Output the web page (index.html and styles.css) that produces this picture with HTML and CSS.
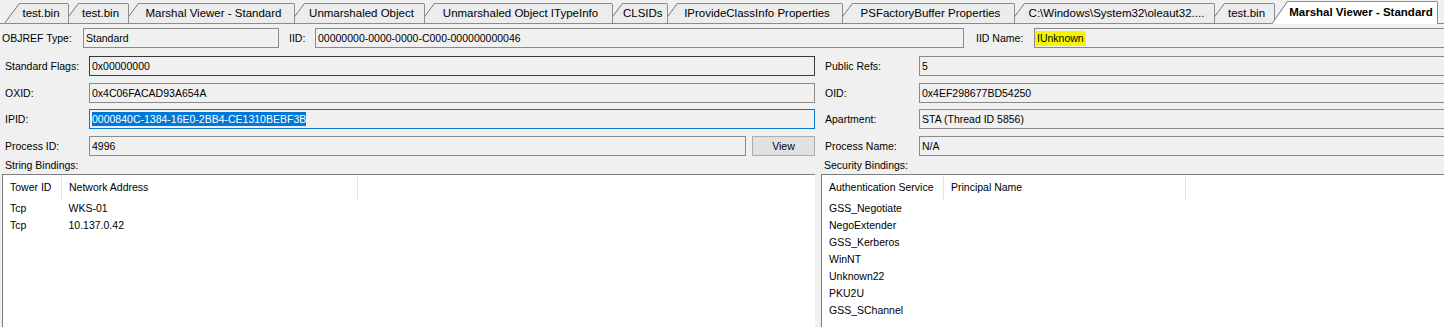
FILE: index.html
```html
<!DOCTYPE html>
<html lang="en">
<head>
    <meta charset="UTF-8">
    <title>Marshal Viewer - Standard</title>
    <link rel="stylesheet" href="styles.css">
</head>
<body>
    <div class="window">
        <div class="tabstrip">
            <div class="tab tab-bin1">test.bin</div>
            <div class="tab tab-bin2">test.bin</div>
            <div class="tab tab-marshal">Marshal Viewer - Standard</div>
            <div class="tab tab-unmarshal">Unmarshaled Object</div>
            <div class="tab tab-typeinfo">Unmarshaled Object ITypeInfo</div>
            <div class="tab tab-clsids">CLSIDs</div>
            <div class="tab tab-classinfo">IProvideClassInfo Properties</div>
            <div class="tab tab-psfactory">PSFactoryBuffer Properties</div>
            <div class="tab tab-oleaut">C:\Windows\System32\oleaut32....</div>
            <div class="tab tab-bin3">test.bin</div>
            <div class="tab active">Marshal Viewer - Standard</div>
        </div>

        <div class="top-row">
            <span class="label objref-label">OBJREF Type:</span>
            <div class="box objref-box">Standard</div>
            <span class="label iid-label">IID:</span>
            <div class="box iid-box">00000000-0000-0000-C000-000000000046</div>
            <span class="label iidname-label">IID Name:</span>
            <div class="box iidname-box"><span class="found-name">IUnknown</span></div>
        </div>

        <div class="fields">
            <span class="label">Standard Flags:</span>
            <div class="box dark">0x00000000</div>
            <span class="label right-label">Public Refs:</span>
            <div class="box">5</div>

            <span class="label">OXID:</span>
            <div class="box">0x4C06FACAD93A654A</div>
            <span class="label right-label">OID:</span>
            <div class="box">0x4EF298677BD54250</div>

            <span class="label">IPID:</span>
            <div class="box focused"><span class="sel">0000840C-1384-16E0-2BB4-CE1310BEBF3B</span></div>
            <span class="label right-label">Apartment:</span>
            <div class="box">STA (Thread ID 5856)</div>

            <span class="label">Process ID:</span>
            <div class="pid-cell">
                <div class="box pid-box">4996</div>
                <button class="view-button">View</button>
            </div>
            <span class="label right-label">Process Name:</span>
            <div class="box">N/A</div>
        </div>

        <div class="bindings">
            <span class="label list-label">String Bindings:</span>
            <span class="label list-label">Security Bindings:</span>

            <div class="list">
                <table class="string-table">
                    <tr>
                        <th class="c1">Tower ID</th>
                        <th class="c2">Network Address</th>
                        <th class="c3"></th>
                    </tr>
                    <tr><td>Tcp</td><td>WKS-01</td><td></td></tr>
                    <tr><td>Tcp</td><td>10.137.0.42</td><td></td></tr>
                </table>
            </div>

            <div class="list">
                <table class="security-table">
                    <tr>
                        <th class="c1">Authentication Service</th>
                        <th class="c2">Principal Name</th>
                        <th class="c3"></th>
                    </tr>
                    <tr><td>GSS_Negotiate</td><td></td><td></td></tr>
                    <tr><td>NegoExtender</td><td></td><td></td></tr>
                    <tr><td>GSS_Kerberos</td><td></td><td></td></tr>
                    <tr><td>WinNT</td><td></td><td></td></tr>
                    <tr><td>Unknown22</td><td></td><td></td></tr>
                    <tr><td>PKU2U</td><td></td><td></td></tr>
                    <tr><td>GSS_SChannel</td><td></td><td></td></tr>
                </table>
            </div>
        </div>
    </div>
</body>
</html>
```

FILE: styles.css
```css
body {
    margin: 0;
    height: 327px;
    overflow: hidden;
    background: #f0f0f0;
    font-family: "Liberation Sans", Arial, sans-serif;
    font-size: 10.5px;
    color: #000;
}
.window {
    width: 1452px;
}

/* document tabs - earlier tabs sit on top of the next one's slant */
.tabstrip {
    display: flex;
    align-items: flex-end;
    height: 23px;
    padding-left: 5px;
    border-bottom: 1px solid #898c95;
    font-size: 11.5px;
}
.tab {
    box-sizing: border-box;
    flex: none;
    height: 20px;
    line-height: 20px;
    margin-left: -5px;
    padding: 0 6px 0 15px;
    text-align: center;
    white-space: nowrap;
    border-right: 1px solid #898c95;
    border-top-right-radius: 2px;
    background:
        linear-gradient(#898c95, #898c95) 14px 0 / 100% 1px no-repeat,
        linear-gradient(to bottom right, transparent calc(50% - 1px), #898c95 calc(50% - 0.4px), #898c95 50%, #ececec calc(50% + 0.6px)) 0 0 / 15px 100% no-repeat,
        linear-gradient(#ececec, #ececec) 15px 0 / 100% 100% no-repeat;
}
.tab-bin1 { width: 64px; margin-left: 0; z-index: 10; }
.tab-bin2 { width: 65px; z-index: 9; }
.tab-marshal { width: 171px; z-index: 8; }
.tab-unmarshal { width: 135px; z-index: 7; }
.tab-typeinfo { width: 193px; z-index: 6; }
.tab-clsids { width: 60px; z-index: 5; }
.tab-classinfo { width: 180px; z-index: 4; }
.tab-psfactory { width: 177px; z-index: 3; }
.tab-oleaut { width: 205px; z-index: 2; }
.tab-bin3 { width: 65px; z-index: 1; }
.tab.active {
    width: 166px;
    height: 23px;
    line-height: 23px;
    margin-bottom: -1px;
    margin-left: -3px;
    padding: 0 3px 0 16px;
    z-index: 20;
    font-weight: bold;
    background:
        linear-gradient(#898c95, #898c95) 15px 0 / 100% 1px no-repeat,
        linear-gradient(to bottom right, transparent calc(50% - 1px), #898c95 calc(50% - 0.4px), #898c95 50%, #fff calc(50% + 0.6px)) 0 0 / 16px 100% no-repeat,
        linear-gradient(#fff, #fff) 16px 0 / 100% 100% no-repeat;
}

/* text boxes */
.label {
    white-space: nowrap;
}
.box {
    box-sizing: border-box;
    height: 20px;
    line-height: 18px;
    padding-left: 2px;
    border: 1px solid #8a8a8a;
    background: #f0f0f0;
    white-space: nowrap;
    overflow: hidden;
}
.box.dark {
    border-color: #3a3a3a;
}
.box.focused {
    border-color: #0078d7;
}
.sel {
    background: #0078d7;
    color: #fff;
    padding: 1px 0;
}
.found-name {
    background: #f5f500;
    padding: 1px 2px 2px 2px;
}

.top-row {
    display: flex;
    align-items: center;
    height: 20px;
    margin-top: 4px;
    padding-left: 2px;
}
.objref-label {
    width: 81px;
}
.objref-box {
    width: 196px;
}
.iid-label {
    width: 26px;
    margin-left: 10px;
}
.iid-box {
    width: 649px;
}
.iidname-label {
    width: 58px;
    margin-left: 12px;
}
.iidname-box {
    flex: 1;
    padding-left: 0;
}

.fields {
    display: grid;
    grid-template-columns: 84px 726px 104px 1fr;
    grid-auto-rows: 20px;
    row-gap: 6.5px;
    align-items: center;
    margin-top: 8px;
    padding-left: 5px;
}
.right-label {
    padding-left: 10px;
}
.pid-cell {
    display: flex;
    gap: 6px;
}
.pid-box {
    width: 657px;
}
.view-button {
    box-sizing: border-box;
    width: 63px;
    height: 20px;
    padding: 0;
    border: 1px solid #adadad;
    background: #e1e1e1;
    font-family: inherit;
    font-size: inherit;
    color: #000;
}

/* list views */
.bindings {
    display: grid;
    grid-template-columns: 813px 1fr;
    grid-template-rows: 18px 160px;
    column-gap: 6px;
    padding-left: 2px;
}
.list-label {
    padding-left: 3px;
    line-height: 18px;
}
.list {
    border-left: 1px solid #7d7d7d;
    border-top: 1px solid #7d7d7d;
    background: #fff;
}
.list table {
    width: 100%;
    table-layout: fixed;
    border-collapse: collapse;
}
.list th {
    height: 25px;
    padding: 0 0 0 7px;
    font-weight: normal;
    text-align: left;
    white-space: nowrap;
}
.list th.c1,
.list th.c2 {
    border-right: 1px solid #e5e5e5;
}
.list td {
    height: 17px;
    padding: 0 0 0 7px;
    white-space: nowrap;
}
.string-table .c1 {
    width: 51px;
}
.string-table .c2 {
    width: 288px;
}
.security-table .c1 {
    width: 114px;
}
.security-table .c2 {
    width: 234px;
}
```
